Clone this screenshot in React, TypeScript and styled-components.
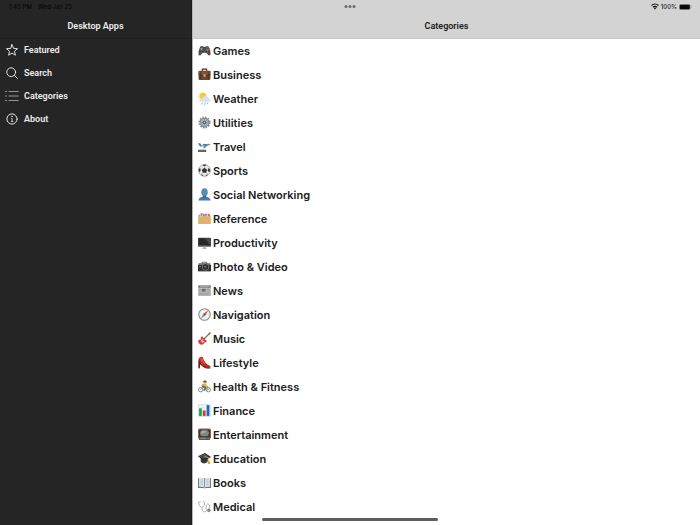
import React from "react";
import styled, { createGlobalStyle } from "styled-components";

const GlobalStyle = createGlobalStyle`
  * { box-sizing: border-box; }
  body {
    margin: 0;
    background: #fff;
    font-family: Inter, "Liberation Sans", sans-serif;
    overflow: hidden;
  }
`;

const Layout = styled.div`
  display: grid;
  grid-template-columns: 192px 1fr;
  height: 100vh;
`;

const Sidebar = styled.aside`
  background: #252525;
  color: #ededed;
  border-right: 1px solid #1c1c1c;
`;

const Content = styled.main`
  min-width: 0;
  background: #fff;
  color: #202020;
  border-left: 1px solid #b5b5b5;
`;

const Header = styled.header<{ $dark?: boolean }>`
  display: flex;
  flex-direction: column;
  height: 39px;
  background: ${(p) => (p.$dark ? "#252525" : "#d3d3d3")};
  border-bottom: 1px solid ${(p) => (p.$dark ? "#202020" : "#cbcbcb")};
`;

const StatusBar = styled.div<{ $end?: boolean }>`
  display: flex;
  align-items: center;
  justify-content: ${(p) => (p.$end ? "flex-end" : "flex-start")};
  gap: ${(p) => (p.$end ? "2px" : "6px")};
  height: 13px;
  padding: 0 8px 0 9px;
  font-size: 6px;
  font-weight: 500;
  line-height: 12px;
  color: ${(p) => (p.$end ? "#1a1a1a" : "#070707")};
`;

const Multitask = styled.button`
  position: fixed;
  top: 5px;
  left: 50%;
  display: flex;
  gap: 1px;
  padding: 0;
  border: 0;
  background: none;
  transform: translateX(-50%);
`;

const Dot = styled.span`
  width: 3px;
  height: 3px;
  border-radius: 50%;
  background: #6c6c6c;
`;

const Title = styled.h1`
  margin: 0;
  padding-top: 5px;
  text-align: center;
  font-family: Roboto, Inter, sans-serif;
  font-size: 9px;
  font-weight: 600;
  line-height: 16px;
  color: inherit;
`;

const MenuList = styled.ul`
  margin: 0;
  padding: 0;
  list-style: none;
  display: grid;
  grid-template-rows: repeat(4, 1fr);
  height: 93px;
`;

const MenuLink = styled.a`
  display: flex;
  align-items: center;
  gap: 5px;
  height: 100%;
  padding: 0 0 2px 5px;
  color: inherit;
  text-decoration: none;
  font-family: Roboto, Inter, sans-serif;
  font-size: 9px;
  font-weight: 600;
`;

const CategoryList = styled.ul`
  margin: 0;
  padding: 0;
  list-style: none;
`;

const CategoryLink = styled.a`
  display: flex;
  align-items: center;
  gap: 2px;
  height: 24px;
  padding: 0 0 1px 5px;
  color: inherit;
  text-decoration: none;
  font-size: 11px;
  font-weight: 600;
`;

const HomeBar = styled.div`
  position: fixed;
  bottom: 4px;
  left: 50%;
  width: 25.2%;
  height: 3px;
  margin-left: -12.6%;
  border-radius: 2px;
  background: #5c5c5c;
`;

const Line = styled.svg`
  width: 14px;
  height: 14px;
  flex: none;
  fill: none;
  stroke: #e4e4e4;
  stroke-width: 1;
  stroke-linecap: round;
  stroke-linejoin: round;
`;

const Emoji = styled.svg`
  width: 13px;
  height: 13px;
  flex: none;
`;

const menu = [
  {
    name: "Featured",
    icon: <path d="M7 1.7 8.6 5.4 12.5 5.7 9.5 8.3 10.4 12.2 7 10.1 3.6 12.2 4.5 8.3 1.5 5.7 5.4 5.4Z" />,
  },
  {
    name: "Search",
    icon: (
      <>
        <circle cx="6.2" cy="6.2" r="4.4" />
        <path d="M9.5 9.5 12.4 12.4" />
      </>
    ),
  },
  {
    name: "Categories",
    icon: (
      <g stroke="#b4b4b4">
        <path strokeWidth=".8" d="M4 2.5H13.3M4 7H13.3M4 11.5H13.3" />
        <path strokeWidth="1.3" d="M1 2.5H1.1M1 7H1.1M1 11.5H1.1" />
      </g>
    ),
  },
  {
    name: "About",
    icon: (
      <>
        <circle cx="7" cy="7" r="5.1" />
        <path strokeWidth=".8" d="M6.5 6.5H7.1V9.3M6.3 9.5H7.9" />
        <circle cx="7" cy="4.5" r=".2" />
      </>
    ),
  },
];

const categories = [
  {
    name: "Games",
    art: (
      <>
        <path fill="#4b4c4a" d="M4 5Q7 2 10 5H14Q17 2 20 5Q24 13 23 20Q20 24 16 16H8Q4 24 1 20Q0 13 4 5Z" />
        <path stroke="#a0a09b" strokeWidth="1.5" d="M4 9H9M6.5 6.5V11.5" />
        <circle cx="9" cy="14" r="2.5" fill="#272827" stroke="#888" />
        <circle cx="15" cy="14" r="2.5" fill="#272827" stroke="#888" />
        <circle cx="18" cy="6.5" r="1.4" fill="#629b58" />
        <circle cx="20.5" cy="9" r="1.5" fill="#e64c28" />
        <circle cx="16" cy="9" r="1.2" fill="#7183aa" />
        <circle cx="18" cy="11.5" r="1.2" fill="#c3a747" />
      </>
    ),
  },
  {
    name: "Business",
    art: (
      <>
        <path fill="none" stroke="#4b3429" strokeWidth="2" d="M8 6V2H16V6" />
        <rect x="1" y="5" width="22" height="17" rx="2" fill="#68432f" />
        <path fill="#81543a" d="M1 6H23V12L12 15 1 12Z" />
        <path stroke="#442b22" strokeWidth="1.4" fill="none" d="M1 12 12 15 23 12M5 6V21M19 6V21" />
        <rect x="10" y="12" width="4" height="4" fill="#d7b26e" />
      </>
    ),
  },
  {
    name: "Weather",
    art: (
      <>
        <circle cx="9" cy="8" r="6.5" fill="#ffc443" />
        <path stroke="#ffd16b" strokeWidth="1.5" d="M8 0V2M1 3 3 5M0 10H2M14 1 12 3" />
        <path fill="#d5e2ec" d="M5 18Q1 17 3 13Q5 10 8 12Q11 6 17 8Q21 10 20 13Q24 14 22 18Z" />
        <path stroke="#6db7e8" strokeWidth="1.6" strokeLinecap="round" d="M8 20 7 22M13 20 12 23M18 20 17 22" />
      </>
    ),
  },
  {
    name: "Utilities",
    art: (
      <>
        <circle cx="12" cy="12" r="9.8" fill="none" stroke="#7c858c" strokeWidth="3" strokeDasharray="2.5 2.63" />
        <circle cx="12" cy="12" r="8" fill="#b0b8bd" stroke="#7b848b" strokeWidth="2" />
        <path stroke="#7d878e" strokeWidth="1.1" d="M12 5V19M5 12H19M7 7 17 17M17 7 7 17" />
        <circle cx="12" cy="12" r="3.4" fill="#596269" />
        <circle cx="12" cy="12" r="1.2" fill="#d5dce0" />
      </>
    ),
  },
  {
    name: "Travel",
    art: (
      <>
        <path fill="#b5c7d5" d="M1 8 6 10 18 7Q24 6 23 9Q21 11 4 13Z" />
        <path fill="#3d79b4" d="M0 6 4 6 7 10 4 12ZM8 8 11 7 19 9 15 11Z" />
        <path fill="#668eb0" d="M10 12 17 10 13 15H10Z" />
        <path stroke="#315c86" strokeWidth="1" d="M8 10 22 8" />
        <path fill="#4a4a4a" d="M0 18H15V22H0Z" />
        <path stroke="#b8b8b8" strokeWidth=".8" d="M1 20H14" />
      </>
    ),
  },
  {
    name: "Sports",
    art: (
      <>
        <circle cx="12" cy="12" r="10.9" fill="#e8e8e8" stroke="#858585" strokeWidth="1.1" />
        <path fill="#343434" d="M12 7 17 11 15 16H9L7 11ZM8 2 12 4 16 2 13 1ZM1 9 4 8 5 12 2 15ZM22 9 19 8 18 13 22 15ZM6 18 10 21 8 22ZM18 18 14 21 16 22Z" />
        <path stroke="#838383" strokeWidth=".8" d="M12 4V7M4 8 7 11M20 8 17 11M9 16 6 18M15 16 18 18" />
      </>
    ),
  },
  {
    name: "Social Networking",
    art: (
      <>
        <path fill="#477ca4" d="M1 23Q1 17 9 16V13H15V16Q23 17 23 23Z" />
        <ellipse cx="12" cy="8" rx="6" ry="7.5" fill="#568db4" />
        <path fill="#386d94" d="M9 14Q12 17 15 14V18Q12 20 9 18Z" />
      </>
    ),
  },
  {
    name: "Reference",
    art: (
      <>
        <path fill="#c99558" d="M1 5H23V22H1Z" />
        <path fill="#e4edf2" d="M4 3H10V9H4ZM13 3H20V9H13Z" />
        <path fill="#698cbd" d="M5 2H8V7H5Z" />
        <path fill="#d66c58" d="M9 3H12V8H9ZM18 3H21V8H18Z" />
        <path fill="#8d7cba" d="M13 3H16V8H13Z" />
        <path fill="#dfb16f" d="M1 8H8L10 7H15L17 8H23V22H1Z" />
      </>
    ),
  },
  {
    name: "Productivity",
    art: (
      <>
        <rect x="0" y="3" width="24" height="17" rx="1" fill="#575a5c" />
        <rect x="1" y="4" width="22" height="13" fill="#27292b" />
        <path fill="#484b4e" d="M12 4H23V17Z" />
        <path fill="#b6b8b9" d="M10 20H14L15 23H9Z" />
        <path stroke="#8b8e90" strokeWidth="1" d="M8 23H16" />
      </>
    ),
  },
  {
    name: "Photo & Video",
    art: (
      <>
        <path fill="#70716c" d="M1 6H6L8 3H16L18 6H23V9H1Z" />
        <path fill="#343533" d="M0 9H24V21H0Z" />
        <path fill="#a8a99f" d="M9 4H15V6H9Z" />
        <circle cx="14" cy="13" r="6" fill="#232423" stroke="#8e8f88" strokeWidth="1.3" />
        <circle cx="14" cy="13" r="3.2" fill="#414b55" />
        <circle cx="13" cy="12" r="1" fill="#8b98aa" />
        <path stroke="#aaa" strokeWidth="1" d="M3 8H6M2 12H6" />
      </>
    ),
  },
  {
    name: "News",
    art: (
      <>
        <path fill="#b9babb" d="M0 2H24V22H0Z" />
        <path fill="#77797a" d="M1 3H23V7H1Z" />
        <path stroke="#e1e1e1" strokeWidth="1" d="M4 5H20" />
        <path fill="#696b6c" d="M7 9H14V14H7Z" />
        <path stroke="#85878a" strokeWidth="1" d="M2 10H5M2 13H5M16 10H22M16 13H22M2 17H22M2 20H22" />
      </>
    ),
  },
  {
    name: "Navigation",
    art: (
      <>
        <circle cx="12" cy="12" r="10.6" fill="#f4f5f6" stroke="#85888c" strokeWidth="2" />
        <circle cx="12" cy="12" r="8" fill="none" stroke="#c2c6c9" strokeWidth="1" strokeDasharray="1 2.14" />
        <path fill="#e25345" d="M19 4 14 14 10 10Z" />
        <path fill="#8f9296" d="M5 20 10 10 14 14Z" />
        <circle cx="12" cy="12" r="1.2" fill="#555" />
      </>
    ),
  },
  {
    name: "Music",
    art: (
      <>
        <path stroke="#9b704d" strokeWidth="2.4" d="M11 13 21 3" />
        <path stroke="#bf7452" strokeWidth="3.5" strokeLinecap="round" d="M20 4 22 2" />
        <path fill="#db3941" d="M5 9Q9 7 10 11L15 15Q18 17 14 19Q11 19 10 22Q7 25 3 22Q-1 19 1 15Q3 13 5 14Q6 13 5 9Z" />
        <path fill="#f5ded5" d="M8 12Q8 16 12 17L8 20 5 17Z" />
        <path stroke="#6d6663" strokeWidth="1" d="M5 19 21 3" />
      </>
    ),
  },
  {
    name: "Lifestyle",
    art: (
      <>
        <path fill="#ba2c24" d="M1 5Q4 0 9 2Q10 10 18 16Q24 18 23 21Q21 24 15 21Q9 19 5 12L3 22H1Z" />
        <path fill="#e34b39" d="M4 4Q6 2 8 3Q9 10 15 16Q10 15 4 7Z" />
        <path fill="#701a1a" d="M1 8 5 12Q8 18 14 20Q20 24 23 21V23H15Q9 21 4 15L3 23H1Z" />
      </>
    ),
  },
  {
    name: "Health & Fitness",
    art: (
      <>
        <circle cx="5" cy="18" r="4" fill="none" stroke="#68757c" strokeWidth="1.5" />
        <circle cx="19" cy="18" r="4" fill="none" stroke="#68757c" strokeWidth="1.5" />
        <path fill="none" stroke="#4d8190" strokeWidth="1.3" d="M5 18 9 12 15 19 19 18 17 11M9 12H17" />
        <circle cx="13" cy="4" r="3" fill="#edb64c" />
        <path fill="#4b5f66" d="M9 4Q9 0 14 1L17 4Z" />
        <path fill="#e1af36" d="M8 7H14L18 12 15 14 10 12 8 14 6 11Z" />
        <path stroke="#54616a" strokeWidth="2.5" strokeLinecap="round" fill="none" d="M9 12 14 14 11 19" />
      </>
    ),
  },
  {
    name: "Finance",
    art: (
      <>
        <path fill="#eef4f6" stroke="#c1cdd3" strokeWidth="1" d="M1 1H23V23H1Z" />
        <path stroke="#dae3e7" strokeWidth="1" d="M1 7H23M1 13H23M1 19H23M8 1V23M16 1V23" />
        <path fill="#12a34f" d="M2 8H7V22H2Z" />
        <path fill="#dc3434" d="M9 12H14V22H9Z" />
        <path fill="#1767bd" d="M16 2H21V22H16Z" />
      </>
    ),
  },
  {
    name: "Entertainment",
    art: (
      <>
        <rect x="0" y="1" width="24" height="19" rx="3" fill="#87644f" />
        <rect x="2" y="3" width="20" height="14" rx="2" fill="#2a3030" />
        <rect x="4" y="4" width="16" height="11" rx="4" fill="#788984" />
        <path fill="#a2b0ab" d="M7 5H16Q12 10 6 11Z" />
        <path fill="#4c4641" d="M2 18H22V22H2Z" />
        <path stroke="#c5b9a4" strokeWidth="1.2" d="M4 19H16M18 19H20" />
      </>
    ),
  },
  {
    name: "Education",
    art: (
      <>
        <path fill="#383a3b" d="M5 10V18Q11 24 18 18V10Z" />
        <path fill="#232526" d="M0 8 13 2 24 9 11 16Z" />
        <path fill="#4b4e50" d="M2 8 13 3 20 8 11 13Z" />
        <path fill="none" stroke="#d8a84a" strokeWidth="1.6" d="M12 8 20 11V19" />
        <path fill="#d8a84a" d="M18 17H22L23 22H18Z" />
      </>
    ),
  },
  {
    name: "Books",
    art: (
      <>
        <path fill="#647f92" d="M0 4H24V22H14L12 23 10 22H0Z" />
        <path fill="#e0e5e8" d="M2 3Q8 2 12 5Q16 2 22 3V20Q16 19 12 21Q8 19 2 20Z" />
        <path stroke="#a3adb4" strokeWidth="1" d="M4 7H10M4 10H10M4 13H10M4 16H10M14 7H20M14 10H20M14 13H20M14 16H20" />
        <path stroke="#6f7b83" strokeWidth="1.3" d="M12 5V21" />
      </>
    ),
  },
  {
    name: "Medical",
    art: (
      <>
        <path fill="none" stroke="#a0a5a8" strokeWidth="1.5" d="M5 3 1 4Q1 12 7 14Q13 12 12 4L9 2M7 14Q8 23 13 22Q17 21 15 15Q14 8 18 7Q23 8 21 14L20 18" />
        <circle cx="20" cy="19" r="3" fill="#62676b" stroke="#aab0b3" strokeWidth="1" />
        <circle cx="20" cy="19" r="1" fill="#d8dddd" />
      </>
    ),
  },
];

export default function App() {
  return (
    <>
      <GlobalStyle />
      <Layout>
        <Sidebar>
          <Header $dark>
            <StatusBar>
              <span>1:45 PM</span>
              <span>Wed Jan 25</span>
            </StatusBar>
            <Title>Desktop Apps</Title>
          </Header>
          <nav aria-label="Sections">
            <MenuList>
              {menu.map((item) => (
                <li key={item.name}>
                  <MenuLink href={`#${item.name.toLowerCase()}`}>
                    <Line viewBox="0 0 14 14" aria-hidden="true">{item.icon}</Line>
                    {item.name}
                  </MenuLink>
                </li>
              ))}
            </MenuList>
          </nav>
        </Sidebar>
        <Content>
          <Header>
            <StatusBar $end>
              <svg width="8" height="7" viewBox="0 0 16 14" aria-label="Wi-Fi">
                <path fill="none" stroke="#111" strokeWidth="2.4" d="M1 5Q8-1 15 5M4 8.5Q8 5 12 8.5" />
                <path fill="#111" d="M5.5 10.2Q8 8.2 10.5 10.2L8 13Z" />
              </svg>
              <span>100%</span>
              <svg width="13" height="6" viewBox="0 0 26 12" aria-label="Battery">
                <rect x=".5" y=".5" width="22" height="11" rx="3" fill="#aaa" stroke="#777" />
                <rect x="1.5" y="1.5" width="20" height="9" rx="2" fill="#080808" />
                <path fill="#777" d="M24 4Q26 6 24 8Z" />
              </svg>
            </StatusBar>
            <Title as="h2">Categories</Title>
          </Header>
          <CategoryList>
            {categories.map((category) => (
              <li key={category.name}>
                <CategoryLink href={`#${encodeURIComponent(category.name)}`}>
                  <Emoji viewBox="0 0 24 24" aria-hidden="true">{category.art}</Emoji>
                  {category.name}
                </CategoryLink>
              </li>
            ))}
          </CategoryList>
        </Content>
      </Layout>
      <Multitask aria-label="Multitasking">
        <Dot />
        <Dot />
        <Dot />
      </Multitask>
      <HomeBar />
    </>
  );
}
